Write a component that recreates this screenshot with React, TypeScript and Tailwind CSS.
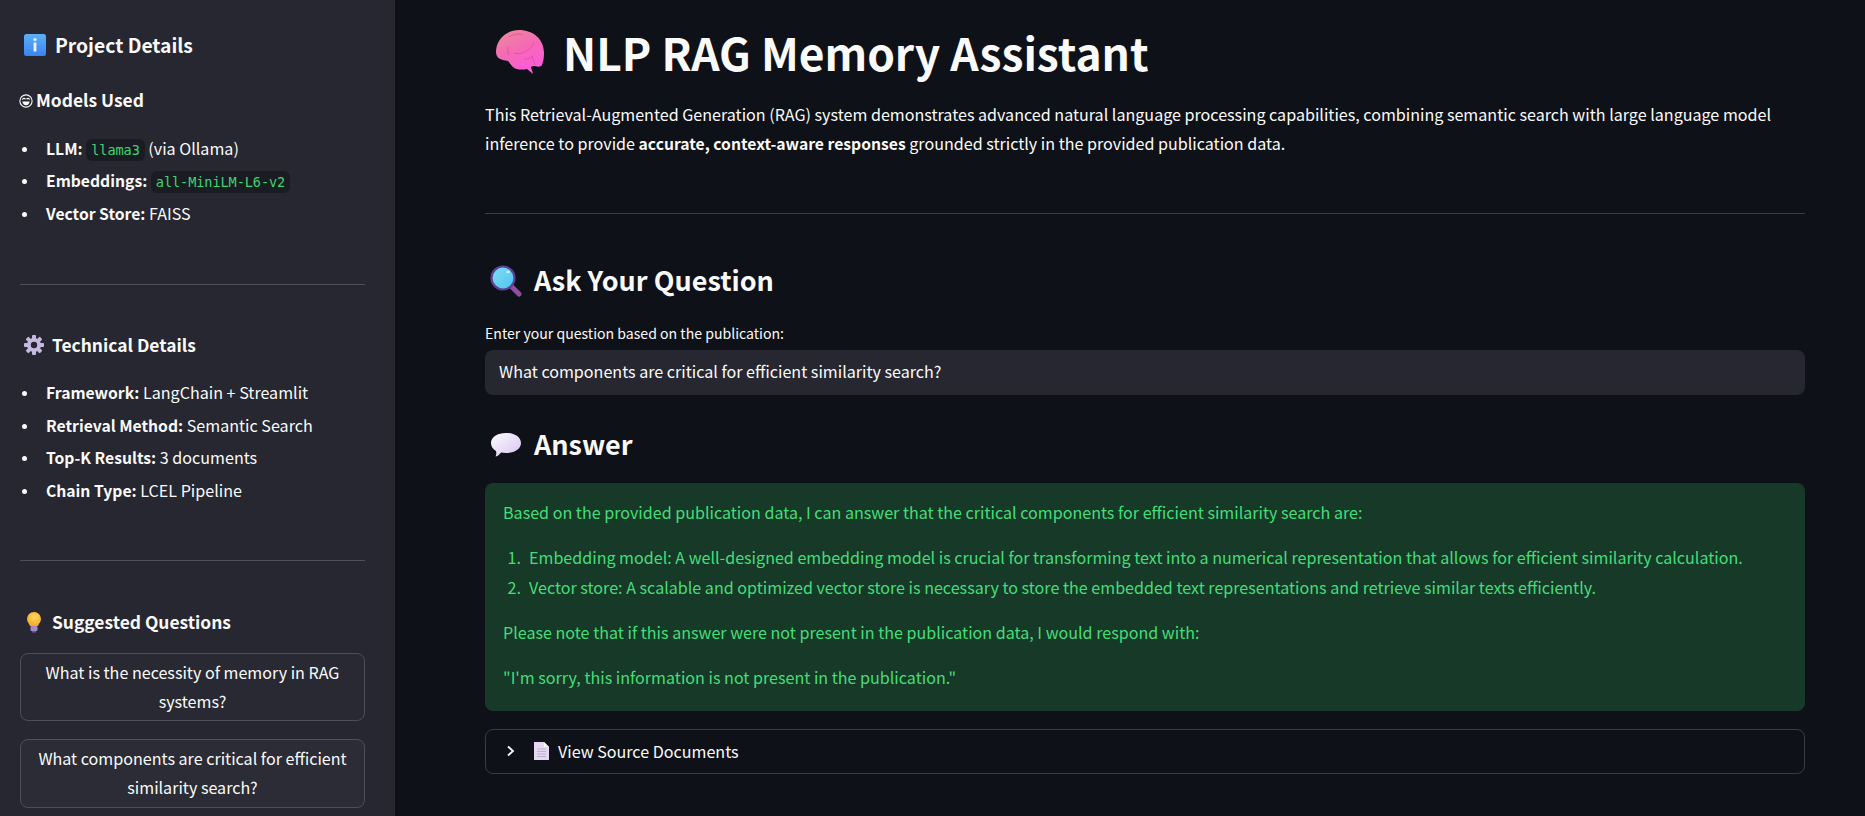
function Info() {
  return (
    <svg width="22" height="22" viewBox="0 0 22 22" className="shrink-0">
      <defs><linearGradient id="i" x1="0" y1="0" x2="0" y2="1"><stop offset="0" stopColor="#5cb0f5" /><stop offset="1" stopColor="#3b82f0" /></linearGradient></defs>
      <rect x="0" y="0" width="22" height="22" rx="2.5" fill="url(#i)" />
      <circle cx="11" cy="5.5" r="1.6" fill="#eaf4ff" />
      <rect x="9.6" y="8.5" width="2.8" height="9" fill="#eaf4ff" />
    </svg>
  );
}
function Face() {
  return (
    <svg width="14" height="14" viewBox="0 0 14 14" className="shrink-0">
      <circle cx="7" cy="7" r="6.1" fill="none" stroke="#fafafa" strokeWidth="1.1" />
      <path d="M3.4 5.6c.6-1.600 2.400-1.600 3-.3M7.600 5.300c.6-1.300 2.400-1.300 3 .3" fill="none" stroke="#fafafa" strokeWidth="1.200" />
      <path d="M3.5 7.600h7c0 2.200-1.500 3.700-3.500 3.700S3.500 9.800 3.500 7.600z" fill="#fafafa" />
    </svg>
  );
}
function Gear() {
  return (
    <svg width="20" height="20" viewBox="0 0 20 20" className="shrink-0">
      <g fill="#c6b9e0">
        {[0, 45, 90, 135].map((a) => (
          <rect key={a} x="8" y="0" width="4" height="20" rx="1" transform={`rotate(${a} 10 10)`} />
        ))}
      </g>
      <circle cx="10" cy="10" r="7" fill="#c6b9e0" />
      <circle cx="10" cy="10" r="3.200" fill="#262730" />
    </svg>
  );
}
function Bulb() {
  return (
    <svg width="20" height="22" viewBox="0 0 20 22" className="shrink-0">
      <defs><radialGradient id="bl" cx=".55" cy=".35" r=".7"><stop offset="0" stopColor="#ffd75e" /><stop offset="1" stopColor="#f4a623" /></radialGradient></defs>
      <path d="M10 1a7 7 0 0 0-7 7c0 3 2.200 4.500 3 7h8c.8-2.500 3-4 3-7a7 7 0 0 0-7-7z" fill="url(#bl)" />
      <rect x="6.500" y="15" width="7" height="5" rx="1" fill="#a68ac4" />
      <rect x="8" y="20" width="4" height="1.500" fill="#6e5a8c" />
    </svg>
  );
}
function Brain() {
  return (
    <svg width="50" height="46" viewBox="0 0 50 46" className="shrink-0">
      <defs>
        <linearGradient id="b" x1="0.1" y1="0" x2="0.6" y2="1"><stop offset="0" stopColor="#ee8a9c" /><stop offset=".5" stopColor="#f46ab4" /><stop offset="1" stopColor="#ff5ade" /></linearGradient>
      </defs>
      <path d="M1 23C1 11 11 1 24 1c14 0 25 9 25 23 0 6-1 9-2 12-1 2-4 2-7 1-2 0-3 0-4 1l2 7-6-5c-4 1-11 1-14-2-3-3-3-4-5-6-6-1-12-2-12-9z" fill="url(#b)" />
      <path d="M14 8c5-3 10-4 14-2M39 13c-1 4-3 6-8 9M31 22c-3 3-8 3-12 2M14 26c-2-3-2-6 0-8M38 27c-2 2-5 3-9 3M40 36l-3-9" stroke="#e0489a" strokeWidth="1" fill="none" opacity=".75" />
    </svg>
  );
}
function Lens() {
  return (
    <svg width="32" height="32" viewBox="0 0 32 32" className="shrink-0">
      <defs><linearGradient id="l" x1="0" y1="0" x2="1" y2="1"><stop offset="0" stopColor="#7fdcf5" /><stop offset="1" stopColor="#4fc4ec" /></linearGradient></defs>
      <path d="M20 20l9 9" stroke="#8d4f9e" strokeWidth="5" strokeLinecap="round" />
      <circle cx="13" cy="13" r="11.500" fill="url(#l)" stroke="#5b4296" strokeWidth="2.200" />
      <ellipse cx="18" cy="7" rx="2" ry="1.300" fill="#c8eefa" />
    </svg>
  );
}
function Bubble() {
  return (
    <svg width="32" height="26" viewBox="0 0 32 26" className="shrink-0">
      <defs><linearGradient id="s" x1="0" y1="0" x2="1" y2="1"><stop offset="0" stopColor="#fdfbff" /><stop offset="1" stopColor="#d8c4f0" /></linearGradient></defs>
      <path d="M16 1c8.500 0 15 4 15 10s-6.500 10-15 10c-2 0-3.500-.2-5-.5C9 23 7 24.500 5.500 24.500 6.500 22.500 6.500 21 6 19 3 17.500 1 14.500 1 11 1 5 7.500 1 16 1z" fill="url(#s)" />
    </svg>
  );
}
function Page() {
  return (
    <svg width="15" height="18" viewBox="0 0 15 18" className="shrink-0">
      <path d="M0 0h10l5 5v13H0z" fill="#e6d8f2" />
      <path d="M10 0l5 5h-5z" fill="#fff" />
      <path d="M3 7h9M3 9.500h9M3 12h9M3 14.500h9" stroke="#b4a4c8" strokeWidth=".8" />
    </svg>
  );
}
function Code({ children }: { children: string }) {
  return <code className="bg-[#1a1c24] text-[#3dd56d] text-[13.6px] font-['DejaVu_Sans_Mono',monospace] tracking-[-0.1px] px-[5px] py-[3px] rounded-[6px]">{children}</code>;
}
function Li({ b, children }: { b: string; children?: React.ReactNode }) {
  return (
    <li className="flex items-center h-[32.6px] leading-[32.600px]">
      <span className="w-[26px] shrink-0 pl-[1px]"><span className="block w-[5px] h-[5px] rounded-full bg-[#fafafa] mt-[1px] ml-[1px]" /></span>
      <span className="whitespace-nowrap"><b className="font-semibold text-[15.7px]">{b}</b> {children}</span>
    </li>
  );
}
export default function App() {
  return (
    <div className="h-screen w-full overflow-hidden flex bg-[#0e1117] text-[#fafafa] font-['Noto_Sans_CJK_SC',sans-serif] text-[16.1px]">
      <aside className="w-[395px] shrink-0 h-full bg-[#262730] pl-[20px] pr-[30px] pt-[29px] overflow-hidden">
        <div className="flex items-center gap-[9px] pl-[4px] text-[19.3px] font-semibold h-[32px]"><Info />Project Details</div>
        <div className="flex items-center gap-[3px] -ml-[1px] mt-[27.5px] text-[17.4px] font-semibold h-[24px]"><Face />Models Used</div>
        <ul className="mt-[20px]">
          <Li b="LLM:"><Code>llama3</Code> (via Ollama)</Li>
          <Li b="Embeddings:"><Code>all-MiniLM-L6-v2</Code></Li>
          <Li b="Vector Store:">FAISS</Li>
        </ul>
        <hr className="mt-[53.5px] border-0 border-t border-[#4d4e56]" />
        <div className="flex items-center gap-[8px] pl-[4px] mt-[44px] text-[17.4px] font-semibold h-[32px]"><Gear />Technical Details</div>
        <ul className="mt-[16px]">
          <Li b="Framework:">LangChain + Streamlit</Li>
          <Li b="Retrieval Method:">Semantic Search</Li>
          <Li b="Top-K Results:">3 documents</Li>
          <Li b="Chain Type:">LCEL Pipeline</Li>
        </ul>
        <hr className="mt-[52.5px] border-0 border-t border-[#4d4e56]" />
        <div className="flex items-center gap-[8px] pl-[4px] mt-[45px] text-[17.4px] font-semibold h-[32px]"><Bulb />Suggested Questions</div>
        <div className="mt-[15px] flex flex-col gap-[18px]">
          <button className="w-full h-[68px] rounded-[8px] border border-[#4d4e56] bg-[#282933] text-center px-[16px] leading-[29px] text-[16.1px]">What is the necessity of memory in RAG systems?</button>
          <button className="w-full h-[69px] rounded-[8px] border border-[#4d4e56] bg-[#2b2c36] text-center px-[16px] leading-[29px] text-[16.1px]">What components are critical for efficient similarity search?</button>
        </div>
      </aside>
      <main className="flex-1 min-w-0 pl-[90px] pr-[60px] pt-[20px]">
        <h1 className="flex items-center gap-[18px] pl-[10px] h-[64px] text-[44.3px] font-bold"><Brain />NLP RAG Memory Assistant</h1>
        <p className="mt-[16px] leading-[29.300px]">This Retrieval-Augmented Generation (RAG) system demonstrates advanced natural language processing capabilities, combining semantic search with large language model inference to provide <b className="font-semibold text-[15.7px]">accurate, context-aware responses</b> grounded strictly in the provided publication data.</p>
        <hr className="mt-[54px] border-0 border-t border-[#3a3c42]" />
        <h2 className="flex items-center gap-[12px] pl-[5px] mt-[47px] h-[40px] text-[27px] font-semibold"><Lens />Ask Your Question</h2>
        <label className="block mt-[22px] text-[14.1px] leading-[20px]">Enter your question based on the publication:</label>
        <div className="mt-[7px] h-[45px] pb-[2px] bg-[#262730] rounded-[8px] flex items-center px-[14px]">What components are critical for efficient similarity search?</div>
        <h2 className="flex items-center gap-[12px] pl-[5px] mt-[30px] h-[40px] text-[27px] font-semibold"><Bubble />Answer</h2>
        <div className="mt-[18px] h-[228px] rounded-[8px] bg-[#173928] text-[#45dd78] px-[18px] pt-[14.5px]">
          <p className="leading-[30px]">Based on the provided publication data, I can answer that the critical components for efficient similarity search are:</p>
          <ol className="mt-[15px]">
            <li className="flex h-[30px] leading-[30px]"><span className="w-[26px] shrink-0 text-right pr-[8px]">1.</span>Embedding model: A well-designed embedding model is crucial for transforming text into a numerical representation that allows for efficient similarity calculation.</li>
            <li className="flex h-[30px] leading-[30px]"><span className="w-[26px] shrink-0 text-right pr-[8px]">2.</span>Vector store: A scalable and optimized vector store is necessary to store the embedded text representations and retrieve similar texts efficiently.</li>
          </ol>
          <p className="mt-[15px] leading-[30px]">Please note that if this answer were not present in the publication data, I would respond with:</p>
          <p className="mt-[15px] leading-[30px]">"I'm sorry, this information is not present in the publication."</p>
        </div>
        <div className="mt-[18px] h-[45px] rounded-[8px] border border-[#3a3c42] flex items-center pl-[17px]">
          <svg width="14" height="14" viewBox="0 0 14 14" className="shrink-0"><path d="M5 2.500L10 7l-5 4.500" fill="none" stroke="#fafafa" strokeWidth="1.800" /></svg>
          <span className="ml-[17px] mr-[9px]"><Page /></span>View Source Documents
        </div>
      </main>
    </div>
  );
}
